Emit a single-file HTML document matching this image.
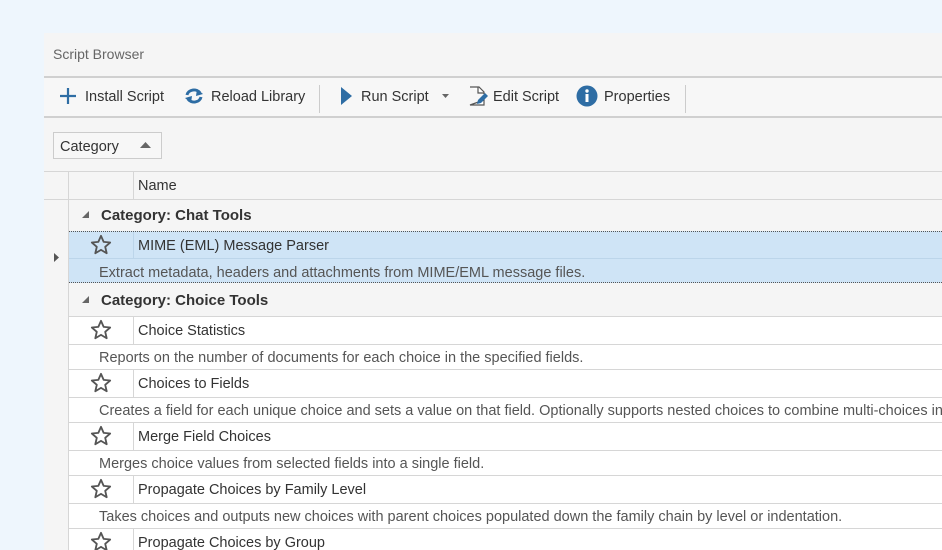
<!DOCTYPE html>
<html><head><meta charset="utf-8"><style>
*{margin:0;padding:0;box-sizing:border-box}
html,body{width:942px;height:550px;overflow:hidden}
body{background:#eef6fd;font-family:"Liberation Sans","DejaVu Sans",sans-serif;position:relative;color:#333;font-size:14.5px}
.p{position:absolute}
.panel{left:44px;top:33px;width:898px;height:517px;background:#f5f5f5}
.t{position:absolute;white-space:nowrap;line-height:16px}
.hl{position:absolute;height:1px;background:#d6d6d6}
.vl{position:absolute;width:1px;background:#d6d6d6}
.star{position:absolute;left:90px;width:22px;height:22px}
</style></head><body>
<div class="p panel"></div>
<div class="t" style="left:53px;top:46px;font-size:14px;color:#666">Script Browser</div>
<div class="hl" style="left:44px;top:76px;width:898px;height:2px;background:#d0d0d0"></div>
<div class="p" style="left:44px;top:78px;width:898px;height:39px;background:#f7f7f7"></div>
<div class="hl" style="left:44px;top:116px;width:898px;height:2px;background:#d0d0d0"></div>
<svg class="p" style="left:58px;top:86px" width="20" height="20"><path d="M10 2V18M2 10H18" stroke="#2e6da4" stroke-width="2.2"/></svg>
<div class="t" style="left:85px;top:89px">Install Script</div>
<svg class="p" style="left:183px;top:86px" width="22" height="20"><path d="M4 9A7 6 0 0 1 17 7" fill="none" stroke="#2e6da4" stroke-width="3"/><path d="M14 3L20 8L13 10Z" fill="#2e6da4"/><path d="M18 11A7 6 0 0 1 5 13" fill="none" stroke="#2e6da4" stroke-width="3"/><path d="M8 17L2 12L9 10Z" fill="#2e6da4"/></svg>
<div class="t" style="left:211px;top:89px">Reload Library</div>
<div class="vl" style="left:319px;top:85px;height:28px;background:#ccc"></div>
<svg class="p" style="left:340px;top:86px" width="14" height="20"><path d="M1 1L12 10L1 19Z" fill="#2e6da4"/></svg>
<div class="t" style="left:361px;top:89px">Run Script</div>
<svg class="p" style="left:442px;top:94px" width="8" height="5"><path d="M0 0H7L3.5 4Z" fill="#666"/></svg>
<svg class="p" style="left:467px;top:85px" width="22" height="22"><path d="M3 2H12L17 7V9M17 15V20H3Z" fill="#fff" stroke="#555" stroke-width="1.2"/><path d="M11 2V8H17" fill="none" stroke="#555" stroke-width="1.2"/><path d="M10 19L11 15L18 8L21 11L14 18Z" fill="#2e6da4"/></svg>
<div class="t" style="left:493px;top:89px">Edit Script</div>
<svg class="p" style="left:576px;top:85px" width="22" height="22"><circle cx="11" cy="11" r="10.5" fill="#2e6da4"/><rect x="9.5" y="9" width="3" height="8" fill="#fff"/><circle cx="11" cy="6" r="1.7" fill="#fff"/></svg>
<div class="t" style="left:604px;top:89px">Properties</div>
<div class="vl" style="left:685px;top:85px;height:28px;background:#ccc"></div>
<div class="p" style="left:53px;top:132px;width:109px;height:27px;border:1px solid #ccc;background:#f7f7f7"></div>
<div class="t" style="left:60px;top:139px">Category</div>
<svg class="p" style="left:140px;top:142px" width="12" height="7"><path d="M0 6H11L5.5 0Z" fill="#666"/></svg>
<div class="hl" style="left:44px;top:171px;width:898px"></div>
<div class="vl" style="left:68px;top:171px;height:379px"></div>
<div class="vl" style="left:133px;top:171px;height:28px"></div>
<div class="t" style="left:138px;top:178px">Name</div>
<div class="hl" style="left:44px;top:199px;width:898px"></div>
<svg class="p" style="left:82px;top:211px" width="8" height="8"><path d="M7 0V7H0Z" fill="#666"/></svg>
<div class="t" style="left:101px;top:208px;font-weight:bold;font-size:15px">Category: Chat Tools</div>
<div class="p" style="left:69px;top:231px;width:873px;height:52px;background:#cfe4f6;border-top:1px dotted #555;border-bottom:1px dotted #555"></div>
<div class="hl" style="left:69px;top:258px;width:873px;background:#bcd5ea"></div>
<div class="vl" style="left:133px;top:232px;height:26px;background:#bcd5ea"></div>
<svg class="p" style="left:54px;top:253px" width="6" height="9"><path d="M0 0L5 4.5L0 9Z" fill="#555"/></svg>
<svg class="star" style="top:234px" viewBox="0 0 24 24"><path d="M12 2L14.9 8.6L22 9.3L16.6 14L18.2 21L12 17.3L5.8 21L7.4 14L2 9.3L9.1 8.6Z" fill="none" stroke="#555" stroke-width="2" stroke-linejoin="round"/></svg>
<div class="t" style="left:138px;top:238px">MIME (EML) Message Parser</div>
<div class="t" style="left:99px;top:265px;color:#555">Extract metadata, headers and attachments from MIME/EML message files.</div>
<svg class="p" style="left:82px;top:296px" width="8" height="8"><path d="M7 0V7H0Z" fill="#666"/></svg>
<div class="t" style="left:101px;top:293px;font-weight:bold;font-size:15px">Category: Choice Tools</div>
<div class="p" style="left:69px;top:316px;width:873px;height:234px;background:#fff"></div>
<div id="rows"></div>
<script>
var items=[["Choice Statistics","Reports on the number of documents for each choice in the specified fields."],["Choices to Fields","Creates a field for each unique choice and sets a value on that field. Optionally supports nested choices to combine multi-choices into"],["Merge Field Choices","Merges choice values from selected fields into a single field."],["Propagate Choices by Family Level","Takes choices and outputs new choices with parent choices populated down the family chain by level or indentation."],["Propagate Choices by Group",""]];
var h="";
items.forEach(function(it,i){var y=316+i*53;
h+='<div class="vl" style="left:133px;top:'+y+'px;height:28px"></div>';
h+='<svg class="star" style="top:'+(y+3)+'px" viewBox="0 0 24 24"><path d="M12 2L14.9 8.6L22 9.3L16.6 14L18.2 21L12 17.3L5.8 21L7.4 14L2 9.3L9.1 8.6Z" fill="none" stroke="#555" stroke-width="2" stroke-linejoin="round"/></svg>';
h+='<div class="t" style="left:138px;top:'+(y+7)+'px">'+it[0]+'</div>';
if(i<4){
h+='<div class="hl" style="left:69px;top:'+(y+28)+'px;width:873px"></div>';
h+='<div class="hl" style="left:69px;top:'+(y+53)+'px;width:873px"></div>';
h+='<div class="t" style="left:99px;top:'+(y+34)+'px;color:#555">'+it[1]+'</div>';}});
document.getElementById("rows").innerHTML=h;
</script>
<div class="hl" style="left:69px;top:316px;width:873px"></div>
</body></html>
